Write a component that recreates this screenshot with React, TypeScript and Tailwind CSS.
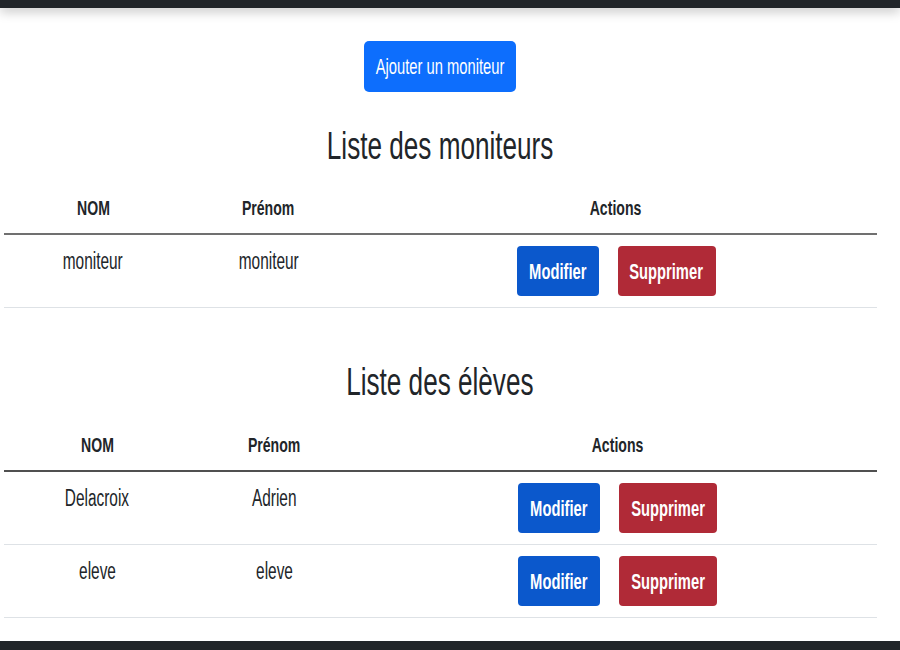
const moniteurs = [{ nom: 'moniteur', prenom: 'moniteur' }];
const eleves = [
  { nom: 'Delacroix', prenom: 'Adrien' },
  { nom: 'eleve', prenom: 'eleve' },
];

function Squeeze({ children, className = '' }: { children: React.ReactNode; className?: string }) {
  return <span className={`inline-block whitespace-nowrap scale-x-[0.67] ${className}`}>{children}</span>;
}

type Person = { nom: string; prenom: string };

function ListTable({
  rows,
  cols,
  divider,
}: {
  rows: Person[];
  cols: string;
  divider: string;
}) {
  return (
    <div className="ml-[4px] w-[873px]">
      <div className={`grid ${cols} border-b-2 ${divider} pb-[12px] text-[21px] font-bold leading-[26px] text-center`}>
        <div><Squeeze>NOM</Squeeze></div>
        <div><Squeeze>Prénom</Squeeze></div>
        <div><Squeeze>Actions</Squeeze></div>
      </div>
      {rows.map((r, i) => (
        <div key={i} className={`grid ${cols} border-b border-[#dee2e6] text-center`}>
          <div className="pt-[12px] text-[23px] leading-[28px]"><Squeeze>{r.nom}</Squeeze></div>
          <div className="pt-[12px] text-[23px] leading-[28px]"><Squeeze>{r.prenom}</Squeeze></div>
          <div className="flex justify-center gap-[19px] pt-[11px] pb-[11px]">
            <button className="flex h-[50px] w-[82px] items-center justify-center rounded-[4px] bg-[#0b58cc] text-[22px] font-bold text-white">
              <Squeeze>Modifier</Squeeze>
            </button>
            <button className="flex h-[50px] w-[98px] items-center justify-center rounded-[4px] bg-[#b02a37] text-[22px] font-bold text-white">
              <Squeeze>Supprimer</Squeeze>
            </button>
          </div>
        </div>
      ))}
    </div>
  );
}

export default function App() {
  return (
    <div className="flex min-h-[650px] flex-col bg-white font-['Liberation_Sans',Arial,sans-serif] text-[#212529]">
      <div className="h-2 bg-[#212529] shadow-[0_3px_12px_rgba(0,0,0,0.28)]" />

      <main className="w-[880px]">
        <div className="flex justify-center pt-[33px]">
          <button className="flex h-[51px] w-[152px] items-center justify-center rounded-[5px] bg-[#0d6efd] text-[22px] text-white">
            <Squeeze>Ajouter un moniteur</Squeeze>
          </button>
        </div>

        <h2 className="mt-[31px] text-center text-[39px] leading-[46px]">
          <Squeeze>Liste des moniteurs</Squeeze>
        </h2>
        <div className="mt-[26px]">
          <ListTable rows={moniteurs} cols="grid-cols-[178px_173px_1fr]" divider="border-[#707070]" />
        </div>

        <h2 className="mt-[51px] text-center text-[39px] leading-[46px]">
          <Squeeze>Liste des élèves</Squeeze>
        </h2>
        <div className="mt-[27px]">
          <ListTable rows={eleves} cols="grid-cols-[186px_168px_1fr]" divider="border-[#505050]" />
        </div>
      </main>

      <div className="mt-[23px] h-[9px] bg-[#212529]" />
    </div>
  );
}
